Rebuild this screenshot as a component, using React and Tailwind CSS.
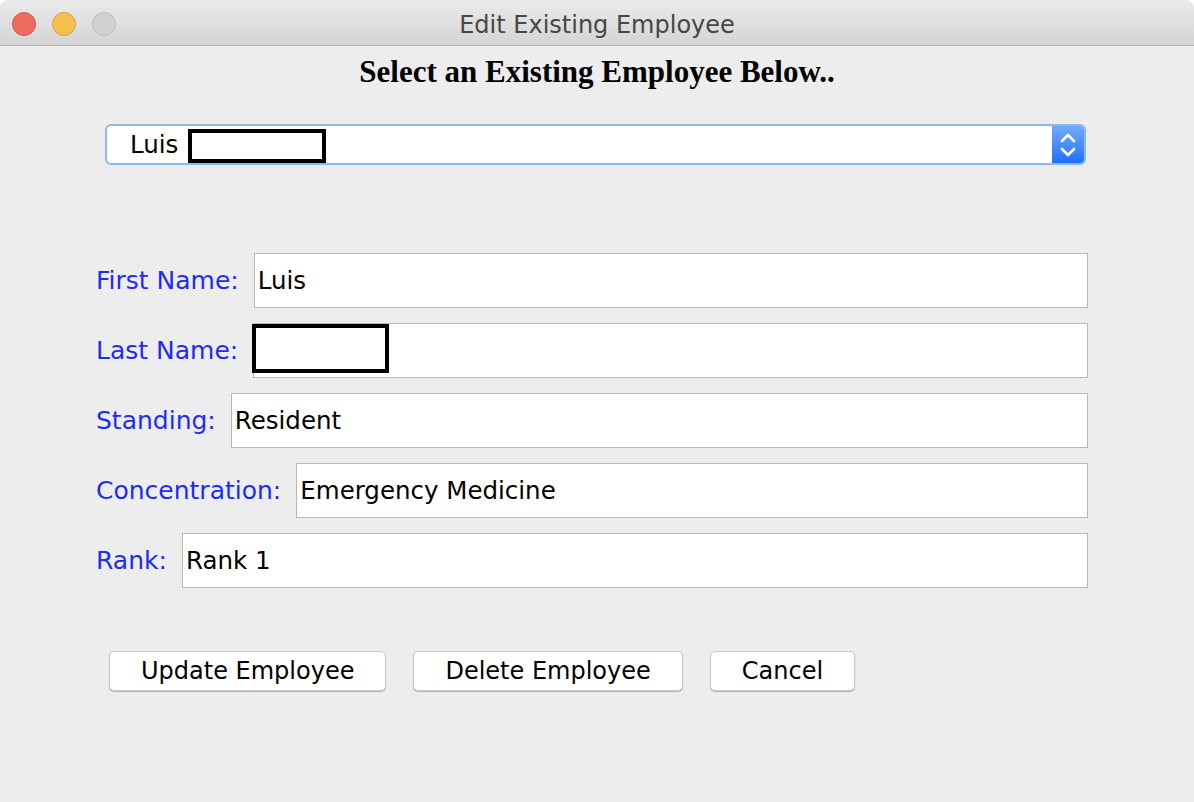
import React from "react";

const sans = { fontFamily: '"DejaVu Sans", "Lucida Grande", sans-serif' };

function Field({ label, value, redacted }) {
  return (
    <div className="flex items-center h-[55px] w-[992px]">
      <span className="text-[25px] text-[#1d2cf6] leading-none whitespace-nowrap">{label}</span>
      <div className="relative flex-1 ml-[15px] h-[55px] bg-white border border-[#b8b8b8] flex items-center pl-[3px] pt-[2px] text-[24.5px] text-black">
        {value}
        {redacted && (
          <div className="absolute left-[-2px] top-0 w-[137px] h-[49px] border-[4px] border-black bg-white" />
        )}
      </div>
    </div>
  );
}

function Button({ children }) {
  return (
    <button className="h-[40px] px-[31px] bg-white rounded-[5px] border border-[#c6c6c6] shadow-[0_1px_1px_rgba(0,0,0,0.25)] text-[24px] text-black leading-none">
      {children}
    </button>
  );
}

export default function App() {
  return (
    <div className="relative w-[1194px] h-[802px] bg-[#ededed] overflow-hidden rounded-t-[8px]" style={sans}>
      <div className="absolute top-0 left-[312px] w-[332px] h-[2px] bg-[#333]" />
      {/* title bar */}
      <div className="relative h-[46px] bg-gradient-to-b from-[#ebebeb] to-[#d4d4d4] border-b border-[#b5b5b5] flex items-center rounded-t-[8px]">
        <div className="flex items-center gap-4 pl-3 pt-[2px]">
          <div className="w-6 h-6 rounded-full bg-[#ee6a5f] border border-[#d5574c]" />
          <div className="w-6 h-6 rounded-full bg-[#f6c04f] border border-[#d9a33f]" />
          <div className="w-6 h-6 rounded-full bg-[#d1d1d1] border border-[#bcbcbc]" />
        </div>
        <div className="absolute inset-0 flex items-center justify-center pt-[4px] text-[24px] text-[#464646] pointer-events-none">
          Edit Existing Employee
        </div>
      </div>

      {/* heading */}
      <div
        className="text-center font-bold text-[31px] leading-[32px] pt-[10px] text-black"
        style={{ fontFamily: '"Liberation Serif", "Times New Roman", serif' }}
      >
        Select an Existing Employee Below..
      </div>

      {/* combobox */}
      <div className="ml-[105px] mt-[36px] w-[981px] h-[41px] flex rounded-[6px] border-2 border-[#8cb8ee] bg-white overflow-hidden">
        <div className="flex-1 flex items-center pl-[23px] pt-[2px] text-[24.5px] text-black">
          Luis
          <div className="ml-[10px] w-[138px] h-[34px] border-[4px] border-black bg-white" />
        </div>
        <div className="w-[32px] h-full bg-gradient-to-b from-[#72aafa] to-[#1c6ff7] flex items-center justify-center">
          <svg width="18" height="28" viewBox="0 0 18 28" fill="none" stroke="white" strokeWidth="2.6" strokeLinecap="round" strokeLinejoin="round">
            <path d="M3 10 L9 4 L15 10" />
            <path d="M3 18 L9 24 L15 18" />
          </svg>
        </div>
      </div>

      {/* fields */}
      <div className="ml-[96px] mt-[88px] flex flex-col gap-[15px]">
        <Field label="First Name:" value="Luis" />
        <Field label="Last Name:" value="" redacted />
        <Field label="Standing:" value="Resident" />
        <Field label="Concentration:" value="Emergency Medicine" />
        <Field label="Rank:" value="Rank 1" />
      </div>

      {/* buttons */}
      <div className="ml-[109px] mt-[63px] flex gap-[27px]">
        <Button>Update Employee</Button>
        <Button>Delete Employee</Button>
        <Button>Cancel</Button>
      </div>
    </div>
  );
}
